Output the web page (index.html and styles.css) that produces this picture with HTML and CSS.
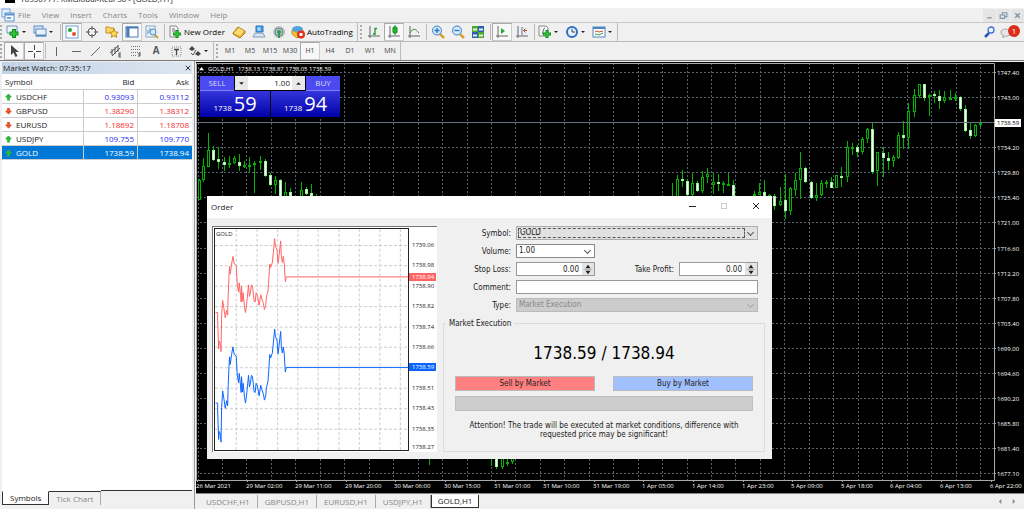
FILE: index.html
```html
<!DOCTYPE html>
<html lang="en">
<head>
  <meta charset="UTF-8">
  <title>GOLD,H1</title>
  <meta name="viewport" content="width=device-width, initial-scale=1.0">
  <link rel="stylesheet" href="styles.css">
</head>
<body>
  <header class="titlebar"><span class="app-icon"></span><span class="app-title">10350777: XMGlobal-Real 30 - [GOLD,H1]</span></header>

  <nav class="menubar">
    <svg class="icon" viewBox="0 0 14 14"><rect x="1" y="1" width="8" height="8" fill="#e8f2fc" stroke="#6fa3d8"/><rect x="4" y="5" width="9" height="8" fill="#fff" stroke="#5b93cf"/><path d="M4 6.500h9" stroke="#5b93cf" stroke-width="2"/><path d="M6 9l1 2 1-2 1 2 1-2" fill="none" stroke="#5b93cf"/></svg>
    <a href="#">File</a><a href="#">View</a><a href="#">Insert</a><a href="#">Charts</a><a href="#">Tools</a><a href="#">Window</a><a href="#">Help</a>
    <div class="window-buttons">
      <button aria-label="Minimize"><svg viewBox="0 0 8 8"><path d="M2 6h4" stroke="#8296ab" stroke-width="1.200"/></svg></button>
      <button aria-label="Restore"><svg viewBox="0 0 8 8"><path d="M3 3V1.500h4V5H5.500M1 3.500h4v3H1z" fill="none" stroke="#8296ab"/></svg></button>
      <button aria-label="Close"><svg viewBox="0 0 8 8"><path d="M2 2l4 4M6 2L2 6" stroke="#8296ab" stroke-width="1.300"/></svg></button>
    </div>
  </nav>

  <div class="toolbar">
    <div class="group first">
      <span class="grip"></span>
      <button class="tool drop" aria-label="New chart"><svg class="icon" viewBox="0 0 14 14"><path d="M1 1h10v7H1z" fill="#eef4fa" stroke="#6d95c0"/><path d="M8 4v9M3.500 8.500h9" stroke="#0b8f1c" stroke-width="4"/><path d="M8 5v7M4.500 8.500h7" stroke="#35c43c" stroke-width="2"/></svg></button>
      <button class="tool drop" aria-label="Profiles"><svg class="icon" viewBox="0 0 14 14"><rect x="1" y="1" width="9" height="7" fill="#d5e5f5" stroke="#5b8cc4"/><rect x="3" y="4" width="10" height="7" fill="#e9f1fa" stroke="#5b8cc4"/><path d="M3 10.500h10" stroke="#5b8cc4" stroke-width="2"/></svg></button>
      <span class="sep"></span>
      <button class="tool pressed" aria-label="Market Watch"><svg class="icon" viewBox="0 0 14 14"><rect x="1" y="1" width="12" height="12" fill="#fff" stroke="#6aa5d9"/><circle cx="5" cy="5" r="2" fill="#1faa2b"/><circle cx="9" cy="9" r="2" fill="#e4502c"/></svg></button>
      <button class="tool" aria-label="Data Window"><svg class="icon" viewBox="0 0 14 14"><circle cx="7" cy="7" r="4" fill="none" stroke="#555"/><path d="M7 1v4M7 9v4M1 7h4M9 7h4" stroke="#555"/></svg></button>
      <button class="tool" aria-label="Navigator"><svg class="icon" viewBox="0 0 14 14"><path d="M1 2h3l1 1h4v5H1z" fill="#fbd964" stroke="#c08d20"/><path d="M9 4l1.300 3 3 .3-2.300 2 .7 3L9 10.700 6.200 12.300l.8-3-2.300-2 3-.3z" fill="#ffdc55" stroke="#c08d20"/></svg></button>
      <button class="tool pressed" aria-label="Terminal"><svg class="icon" viewBox="0 0 14 14"><rect x="1" y="2" width="12" height="10" fill="#fff" stroke="#4a7db5"/><path d="M1 2.500h12" stroke="#4a7db5" stroke-width="2"/><path d="M3 3v9" stroke="#4a7db5" stroke-width="3"/></svg></button>
      <button class="tool" aria-label="Strategy Tester"><svg class="icon" viewBox="0 0 14 14"><rect x="1" y="1" width="9" height="11" fill="#e8f0f8" stroke="#8aa9c8"/><path d="M3 9V5M5 8V3M7 9V6" stroke="#6c8fb4"/><path d="M10 10l3 3" stroke="#d09b2c" stroke-width="2"/><circle cx="8" cy="7" r="3" fill="#cfe6fb" stroke="#4e8cca"/></svg></button>
      <span class="sep"></span>
      <button class="tool wide"><svg class="icon" viewBox="0 0 14 14"><path d="M2 1h6l2 2v9H2z" fill="#f5f5f5" stroke="#888"/><path d="M4 4h3M4 6h4" stroke="#777"/><path d="M9 5v8M5 9h8" stroke="#0b8f1c" stroke-width="3"/><path d="M9 6v6M6 9h6" stroke="#35c43c" stroke-width="1.500"/></svg>New Order</button>
      <button class="tool" aria-label="MetaEditor"><svg class="icon" viewBox="0 0 14 14"><path d="M1 8l5-6 7 4v2l-5 5-7-4z" fill="#e9ae2d" stroke="#b4791a"/><path d="M2 8l5-5 5 3-4 5z" fill="#ffdd74"/></svg></button>
      <button class="tool" aria-label="Options"><svg class="icon" viewBox="0 0 14 14"><path d="M4 1h7v6H4z" fill="#3c9be8" stroke="#3475b4"/><circle cx="7" cy="4" r="2" fill="#9bd2ff"/><path d="M3 8h8l2 4H1z" fill="#d7e5f3" stroke="#8099b5"/></svg></button>
      <button class="tool" aria-label="Signals"><svg class="icon" viewBox="0 0 14 14"><circle cx="7" cy="7" r="6" fill="#b9c3c5"/><circle cx="7" cy="7" r="4" fill="none" stroke="#6f8187"/><circle cx="7" cy="7" r="2" fill="#2c9f48"/><path d="M7 7v6" stroke="#2c9f48" stroke-width="2"/></svg></button>
      <button class="tool wide"><svg class="icon" viewBox="0 0 14 14"><path d="M1 5l5 3 6-3v4l-6 4-5-4z" fill="#f3c63a" stroke="#c18f22"/><ellipse cx="6.500" cy="4" rx="5.500" ry="3" fill="#51a5dc"/><circle cx="10" cy="9.500" r="4" fill="#dc2f1c"/><rect x="8.500" y="8" width="3" height="3" fill="#fff"/></svg>AutoTrading</button>
    </div>
    <div class="group">
      <span class="grip"></span>
      <button class="tool" aria-label="Bar Chart"><svg class="icon" viewBox="0 0 14 14"><path d="M3 1v12M1 11h12" stroke="#666"/><path d="M8 3v7M8 3.500h2M6 9h2" stroke="#169b20" stroke-width="1.300"/></svg></button>
      <button class="tool pressed" aria-label="Candlesticks"><svg class="icon" viewBox="0 0 14 14"><path d="M3 1v12M1 11h12" stroke="#666"/><path d="M8 0v10" stroke="#169b20"/><rect x="6" y="2" width="4" height="6" rx="1" fill="#22b82d" stroke="#118519"/></svg></button>
      <button class="tool" aria-label="Line Chart"><svg class="icon" viewBox="0 0 14 14"><path d="M3 1v12M1 11h12" stroke="#666"/><path d="M3 8c3-5 5-5 9 0" fill="none" stroke="#3c8b3f"/></svg></button>
      <span class="sep"></span>
      <button class="tool" aria-label="Zoom In"><svg class="icon" viewBox="0 0 14 14"><path d="M9 9l4 4" stroke="#d4a22c" stroke-width="2.500"/><circle cx="6" cy="5.500" r="4.500" fill="#d5eafc" stroke="#3a7fc6"/><path d="M3.500 5.500h5M6 3v5" stroke="#2b72ba" stroke-width="1.300"/></svg></button>
      <button class="tool" aria-label="Zoom Out"><svg class="icon" viewBox="0 0 14 14"><path d="M9 9l4 4" stroke="#d4a22c" stroke-width="2.500"/><circle cx="6" cy="5.500" r="4.500" fill="#d5eafc" stroke="#3a7fc6"/><path d="M3.500 5.500h5" stroke="#2b72ba" stroke-width="1.300"/></svg></button>
      <button class="tool" aria-label="Tile Windows"><svg class="icon" viewBox="0 0 14 14"><path d="M1 1h6v6H1zM7 7h6v6H7z" fill="#4da832"/><path d="M7 1h6v6H7zM1 7h6v6H1z" fill="#2e5fb0"/><path d="M2 3.500h4v2H2zM8 3.500h4v2H8zM2 9.500h4v2H2zM8 9.500h4v2H8z" fill="#e6f2e0"/></svg></button>
      <span class="sep"></span>
      <button class="tool pressed" aria-label="Auto Scroll"><svg class="icon" viewBox="0 0 14 14"><path d="M3 1v12M1 11h12" stroke="#666"/><path d="M6 3l4 3-4 3z" fill="#1fae2a"/></svg></button>
      <button class="tool" aria-label="Chart Shift"><svg class="icon" viewBox="0 0 14 14"><path d="M3 1v12M1 11h12" stroke="#666"/><path d="M7 2v8" stroke="#3a78ba"/><path d="M12 5.500H9M10.500 3.500l-2 2 2 2" fill="none" stroke="#c44a26"/></svg></button>
      <span class="sep"></span>
      <button class="tool drop" aria-label="Indicators"><svg class="icon" viewBox="0 0 14 14"><path d="M1 1h7l2 2v8H1z" fill="#f5f5f5" stroke="#888"/><path d="M4 9c1 0 1-6 3-6" fill="none" stroke="#666"/><path d="M9 5v8M5 9h8" stroke="#0b8f1c" stroke-width="3"/><path d="M9 6v6M6 9h6" stroke="#35c43c" stroke-width="1.500"/></svg></button>
      <button class="tool drop" aria-label="Periods"><svg class="icon" viewBox="0 0 14 14"><circle cx="7" cy="7" r="5" fill="#eaf3fc" stroke="#2a6fc4" stroke-width="2"/><path d="M7 4v3h3" fill="none" stroke="#345"/></svg></button>
      <button class="tool drop" aria-label="Templates"><svg class="icon" viewBox="0 0 14 14"><rect x="1" y="2" width="12" height="10" fill="#fff" stroke="#4f86c0"/><path d="M1 3h12" stroke="#4f86c0" stroke-width="2"/><path d="M3 7l2-1 2 1 4-1" fill="none" stroke="#c8432c"/><path d="M3 10l2-1 2 1 4-2" fill="none" stroke="#2f9b35"/></svg></button>
    </div>
    <div class="toolbar-end">
      <button class="tool" aria-label="Search"><svg class="icon" viewBox="0 0 14 14"><path d="M6 8l-4 4" stroke="#2d55b8" stroke-width="2.500"/><circle cx="8" cy="5" r="3" fill="#eef4ff" stroke="#3d6bd0" stroke-width="1.300"/></svg></button>
      <button class="tool notice" aria-label="Messages"><svg class="icon" viewBox="0 0 14 14"><path d="M1 6q4-4 9 0v4q-3 2-6 1l-1 2v-3q-3-1-2-4z" fill="#e6e6e6" stroke="#aaa"/></svg><span class="badge">1</span></button>
    </div>
  </div>

  <div class="toolbar second">
    <div class="group first">
      <span class="grip"></span>
      <button class="tool pressed" aria-label="Cursor"><svg class="icon" viewBox="0 0 14 14"><path d="M4 1v10l2.500-2.500L8.500 13l2-1-2-4H12z" fill="#444"/></svg></button>
      <button class="tool pressed" aria-label="Crosshair"><svg class="icon" viewBox="0 0 14 14"><path d="M7.500 1v5M7.500 9v5M1 7.500h5M9 7.500h5" stroke="#444"/></svg></button>
      <span class="sep"></span>
      <button class="tool" aria-label="Vertical Line"><svg class="icon" viewBox="0 0 14 14"><path d="M7.500 3v9" stroke="#666"/></svg></button>
      <button class="tool" aria-label="Horizontal Line"><svg class="icon" viewBox="0 0 14 14"><path d="M3 7.500h9" stroke="#666"/></svg></button>
      <button class="tool" aria-label="Trendline"><svg class="icon" viewBox="0 0 14 14"><path d="M2 12l9-9" stroke="#666"/></svg></button>
      <button class="tool" aria-label="Channel"><svg class="icon" viewBox="0 0 14 14"><path d="M1 9l8-7M3 12l8-8M3 5v6M6 3v7M9 1v7" stroke="#555" fill="none"/><path d="M12 9h-2v4h2M10 11h2" stroke="#555" fill="none"/></svg></button>
      <button class="tool" aria-label="Fibonacci"><svg class="icon" viewBox="0 0 14 14"><path d="M2 2.500h10M2 5.500h10M2 8.500h10M2 11.500h6" stroke="#777" stroke-dasharray="1 1"/><path d="M12 9h-2v4M10 11h2" stroke="#555" fill="none"/></svg></button>
      <button class="tool letter" aria-label="Text">A</button>
      <button class="tool" aria-label="Text Label"><svg class="icon" viewBox="0 0 14 14"><rect x="3" y="3" width="9" height="9" fill="none" stroke="#888" stroke-dasharray="1 1"/><path d="M5 5.500h5M7.500 5v6" stroke="#444" stroke-width="1.300"/></svg></button>
      <button class="tool drop" aria-label="Arrows"><svg class="icon" viewBox="0 0 14 14"><path d="M4 2l3 3-3 2-3-2zM10 7l3 3-3 2-3-2z" fill="#444"/><path d="M3 9l2 2 3-5" fill="none" stroke="#555"/></svg></button>
    </div>
    <div class="group periods">
      <span class="grip"></span>
      <button class="tool">M1</button><button class="tool">M5</button><button class="tool">M15</button><button class="tool">M30</button><button class="tool pressed">H1</button><button class="tool">H4</button><button class="tool">D1</button><button class="tool">W1</button><button class="tool">MN</button>
    </div>
  </div>

  <main class="workspace">
    <aside class="market-watch">
      <div class="panel-title">Market Watch: 07:35:17 <button aria-label="Close panel"><svg viewBox="0 0 8 8"><path d="M1 1l6 6M7 1L1 7" stroke="#222" stroke-width="1.200"/></svg></button></div>
      <table>
        <thead>
          <tr><th>Symbol</th><th>Bid</th><th>Ask</th></tr>
        </thead>
        <tbody>
          <tr class="up"><td>USDCHF</td><td>0.93093</td><td>0.93112</td></tr>
          <tr class="down"><td>GBPUSD</td><td>1.38290</td><td>1.38312</td></tr>
          <tr class="down"><td>EURUSD</td><td>1.18692</td><td>1.18708</td></tr>
          <tr class="up"><td>USDJPY</td><td>109.755</td><td>109.770</td></tr>
          <tr class="up selected"><td>GOLD</td><td>1738.59</td><td>1738.94</td></tr>
        </tbody>
      </table>
      <div class="panel-tabs">
        <button class="active">Symbols</button><button>Tick Chart</button>
      </div>
    </aside>

    <section class="chart-window">
      <div class="chart">
        <svg id="chart"></svg>
        <div class="chart-info"><svg viewBox="0 0 6 4"><path d="M0 4l3-4 3 4z" fill="#fff"/></svg><span>GOLD,H1</span><span>1738.13 1738.87 1738.05 1738.59</span></div>
        <div class="one-click">
          <button class="side">SELL</button>
          <div class="lots">
            <button aria-label="Less"><svg viewBox="0 0 6 6"><path d="M1 2h4L3 4z" fill="#222"/></svg></button>
            <input type="text" value="1.00" aria-label="Lots">
            <button aria-label="More"><svg viewBox="0 0 6 6"><path d="M1 4h4L3 2z" fill="#222"/></svg></button>
          </div>
          <button class="side">BUY</button>
          <button class="quote"><small>1738</small>59</button>
          <button class="quote"><small>1738</small>94</button>
        </div>
      </div>
      <div class="chart-tabs">
        <button>USDCHF,H1</button><button>GBPUSD,H1</button><button>EURUSD,H1</button><button>USDJPY,H1</button><button class="active">GOLD,H1</button>
        <span class="tab-scroll"><svg viewBox="0 0 6 6"><path d="M4 0v6L1 3z" fill="#888"/></svg><svg viewBox="0 0 6 6"><path d="M2 0v6l3-3z" fill="#888"/></svg></span>
      </div>
    </section>
  </main>

  <div class="dialog" role="dialog" aria-labelledby="order-title">
    <div class="dialog-title">
      <span id="order-title">Order</span>
      <button aria-label="Minimize"><svg viewBox="0 0 10 10"><path d="M2 5.500h7" stroke="#222"/></svg></button>
      <button aria-label="Maximize" disabled><svg viewBox="0 0 10 10"><rect x="2.500" y="2.500" width="5" height="5" fill="none" stroke="#ccc"/></svg></button>
      <button aria-label="Close"><svg viewBox="0 0 10 10"><path d="M2 2l6 6M8 2L2 8" stroke="#222"/></svg></button>
    </div>
    <div class="dialog-body">
      <div class="ticks">
        <div class="tick-plot">
          <span>GOLD</span>
          <svg viewBox="30 99 582 669" preserveAspectRatio="none">
            <path class="tick-grid" d="M94 99v669M157 99v669M219 99v669M280 99v669M341 99v669M404 99v669M465 99v669M527 99v669M589 99v669M30 149h582M30 210h582M30 272h582M30 334h582M30 396h582M30 457h582M30 519h582M30 581h582M30 643h582M30 705h582"/>
            <g class="ask"><polyline id="ticks" points="32,352 38,352 38,375 41,462 43,438 47,450 48,470 50,365 53,315 57,340 61,368 65,345 68,360 70,295 72,245 74,212 76,235 80,205 84,182 88,205 94,210 97,265 101,290 103,262 107,300 109,320 110,272 113,318 115,292 119,335 122,352 125,330 127,310 130,280 131,268 134,303 137,290 140,268 143,272 148,318 151,320 154,292 158,300 163,330 168,298 171,310 176,325 179,343 183,330 185,305 190,285 193,240 195,205 198,215 203,200 206,170 210,128 212,150 217,162 220,203 223,180 228,135 230,180 233,200 236,182 239,205 242,258 245,244 612,244"/></g>
            <use class="bid" href="#ticks" y="274"/>
          </svg>
        </div>
        <div class="tick-axis">
          <span>1739.06</span><span>1738.98</span><span>1738.90</span><span>1738.82</span><span>1738.74</span><span>1738.66</span><span class="bid-price">1738.59</span><span>1738.51</span><span>1738.43</span><span>1738.35</span><span class="lowest">1738.27</span>
          <span class="ask-price">1738.94</span>
        </div>
      </div>
      <form class="order-form">
        <div class="fields">
          <label for="symbol">Symbol:</label>
          <div class="combo full focused"><select id="symbol"><option>GOLD</option></select></div>
          <label for="volume">Volume:</label>
          <div class="combo white"><select id="volume"><option>1.00</option></select></div>
          <label for="sl">Stop Loss:</label>
          <div class="spin"><input id="sl" type="text" value="0.00"><svg viewBox="0 0 12 14"><path d="M3 6h6L6 2zM3 9h6l-3 4z" fill="#222"/><path d="M1 7.500h10" stroke="#aaa"/></svg></div>
          <label for="tp">Take Profit:</label>
          <div class="spin"><input id="tp" type="text" value="0.00"><svg viewBox="0 0 12 14"><path d="M3 6h6L6 2zM3 9h6l-3 4z" fill="#222"/><path d="M1 7.500h10" stroke="#aaa"/></svg></div>
          <label for="comment">Comment:</label>
          <input class="full" id="comment" type="text">
          <label for="type">Type:</label>
          <div class="combo full off"><select id="type" disabled><option>Market Execution</option></select></div>
        </div>
        <fieldset>
          <legend>Market Execution</legend>
          <p class="price">1738.59 / 1738.94</p>
          <div class="deal">
            <button type="button" class="sell">Sell by Market</button>
            <button type="button" class="buy">Buy by Market</button>
          </div>
          <button type="button" class="close-order" aria-label="Close order" disabled></button>
          <p class="warning">Attention! The trade will be executed at market conditions, difference with requested price may be significant!</p>
        </fieldset>
      </form>
    </div>
  </div>

  <script src="chart.js"></script>
</body>
</html>
```
FILE: chart.js
```js
const svg = document.getElementById('chart');
const axisWidth = 30;
const axisHeight = 13;
const baseWidth = 798; // plot width the bar positions are stored for

// x, high, body top, body bottom, low, falling
const bars = [
  [3,117,118,138,138,0], [7,96,104,118,120,0], [12,71,88,105,105,0], [17,84,88,98,99,1],
  [22,85,97,100,107,1], [28,95,100,103,109,1], [33,94,101,103,106,0], [38,94,96,101,102,0],
  [43,92,100,104,109,1], [48,99,103,104,106,0], [53,95,103,105,110,0], [58,99,101,103,131,0],
  [64,94,99,101,108,0], [69,97,99,114,115,1], [74,111,113,123,124,1], [79,114,118,123,132,0],
  [84,117,118,135,135,1], [89,120,130,135,135,0], [94,126,130,134,135,1], [105,120,128,135,135,0],
  [110,125,127,132,133,1], [115,122,131,134,135,1], [120,132,134,135,136,0],
  [233,380,385,390,403,0], [295,380,385,390,404,0], [300,390,392,405,407,1], [306,390,396,405,407,0],
  [311,390,400,402,404,0], [316,390,396,400,402,0],
  [476,121,134,135,135,0], [481,113,117,135,135,0], [486,108,117,119,125,1], [491,117,119,133,134,1],
  [496,111,121,133,134,0], [501,119,121,129,130,1], [506,109,115,129,131,0], [511,106,112,115,121,0],
  [517,111,120,123,132,0], [522,112,120,122,129,1], [527,119,121,122,131,0], [532,111,122,123,123,0],
  [537,118,123,134,134,1], [558,129,132,133,134,0], [563,121,130,133,133,0], [568,118,130,134,134,1],
  [573,132,133,134,134,0], [578,132,134,144,148,1], [584,125,139,143,144,0], [589,112,138,149,157,1],
  [594,125,126,149,153,0], [599,111,118,128,134,0], [604,90,106,118,137,0], [609,105,106,120,121,1],
  [615,119,120,136,137,1], [620,121,133,136,139,0], [625,118,121,133,134,0], [630,118,120,122,126,0],
  [635,115,120,126,126,1], [640,113,113,126,126,0], [645,105,114,115,125,1], [651,79,85,115,120,0],
  [656,81,85,86,93,0], [661,83,85,90,95,1], [666,75,77,90,92,0], [671,66,67,77,81,0],
  [676,61,67,110,112,1], [681,90,90,109,124,0], [687,85,91,96,115,1], [692,90,96,99,108,1],
  [697,93,95,99,105,0], [702,70,73,96,97,0], [707,59,73,76,87,1], [712,41,49,76,87,0],
  [718,27,33,50,55,0], [723,22,22,34,36,0], [728,22,22,36,39,1], [733,32,33,35,54,0],
  [738,29,32,34,41,1], [743,28,34,39,47,1], [748,29,35,39,41,0], [754,28,36,37,38,0],
  [759,31,35,37,39,0], [764,34,35,47,49,1], [769,43,47,69,70,1], [774,61,68,74,77,1],
  [779,62,63,74,75,0], [784,59,61,63,65,0]
];

const prices = ['1747.40', '1743.00', '', '1734.20', '1729.80', '1725.40', '1721.00', '1716.60', '1712.20',
  '1707.80', '1703.40', '1699.00', '1694.60', '1690.20', '1685.80', '1681.40', '1677.10'];

const times = ['26 Mar 2021', '29 Mar 02:00', '29 Mar 11:00', '29 Mar 20:00', '30 Mar 06:00', '30 Mar 15:00',
  '31 Mar 01:00', '31 Mar 10:00', '31 Mar 19:00', '1 Apr 05:00', '1 Apr 14:00', '1 Apr 23:00',
  '5 Apr 09:00', '5 Apr 18:00', '6 Apr 04:00', '6 Apr 13:00', '6 Apr 22:00'];

function add(tag, attrs, text) {
  const el = document.createElementNS('http://www.w3.org/2000/svg', tag);
  for (const name in attrs) el.setAttribute(name, attrs[name]);
  if (text) el.textContent = text;
  svg.appendChild(el);
}

function line(cls, x1, y1, x2, y2) {
  add('line', { class: cls, x1, y1, x2, y2 });
}

function draw() {
  svg.textContent = '';
  const w = svg.clientWidth - axisWidth;
  const h = svg.clientHeight - axisHeight;
  const shift = w - baseWidth;

  // Grid
  for (let x = 784 + shift; x > 0; x -= 24.45) line('grid', Math.round(x) + 0.5, 1, Math.round(x) + 0.5, h);
  prices.forEach((p, i) => {
    const y = Math.round(10 + i * 25.08) + 0.5;
    line('grid', 0, y, w, y);
    if (p) {
      line('frame', w, y, w + 2, y);
      add('text', { class: 'axis', x: w + 3, y: y + 2 }, p);
    }
  });

  // Bars
  bars.forEach(([x, high, top, bottom, low, falling]) => {
    const cx = x + shift + 0.5;
    line('wick', cx, high, cx, low);
    add('rect', {
      class: falling ? 'bar falling' : 'bar',
      x: cx - 1, y: top + 0.5, width: 2, height: Math.max(bottom - top - 1, 1)
    });
  });

  // Current price
  line('current', 0, 60.5, w, 60.5);
  add('rect', { class: 'price-box', x: w + 1, y: 57, width: 26, height: 8 });
  add('text', { class: 'axis dark', x: w + 3, y: 63 }, '1738.59');

  // Frame and time axis
  add('path', { class: 'frame', d: `M0.5 ${h}V1.500H${w + 0.5}V${h + 0.5}H0` });
  times.forEach((t, i) => {
    const x = Math.round(i * 49.6 + shift);
    line('frame', x + 1.5, h, x + 1.5, h + 2);
    add('text', { class: 'axis', x, y: h + 8 }, t);
  });
}

draw();
window.addEventListener('resize', draw);
```
FILE: styles.css
```css
* {
  box-sizing: border-box;
}

body {
  margin: 0;
  height: 100vh;
  display: flex;
  flex-direction: column;
  position: relative;
  overflow: hidden;
  background: #f0f0f0;
  color: #222;
  font: 8px/12px "Open Sans", "Noto Sans", sans-serif;
}

button, input, select {
  font: inherit;
  color: inherit;
  margin: 0;
  padding: 0;
  border: 0;
  border-radius: 0;
  background: none;
}

svg {
  display: block;
}

.icon {
  width: 14px;
  height: 14px;
  flex: none;
}

/* Title and menu */
.titlebar {
  height: 8px;
  display: flex;
  align-items: flex-end;
  gap: 5px;
  padding: 0 5px 5px;
  background: #fff;
  line-height: 8px;
}

.app-icon {
  width: 10px;
  height: 10px;
  background: #000;
}

.menubar {
  height: 15px;
  display: flex;
  align-items: center;
  gap: 11px;
  padding-left: 1px;
  border-bottom: 1px solid #c8c8c8;
}

.menubar .icon {
  margin-right: -8px;
}

.menubar a {
  color: #888;
  text-decoration: none;
}

.window-buttons {
  margin-left: auto;
  display: flex;
  gap: 1px;
}

.window-buttons button {
  width: 13px;
  height: 13px;
  padding: 2px;
  background: #e5e5e5;
}

/* Toolbars */
.toolbar {
  height: 19px;
  display: flex;
  border-bottom: 1px solid #bbb;
}

.toolbar.second {
  border-bottom-color: #777;
}

.group {
  display: flex;
  align-items: stretch;
  padding-left: 2px;
  border-right: 1px solid #bbb;
}

.group.first {
  padding-left: 0;
}

.grip {
  width: 3px;
  margin: 2px 1px 2px 0;
  border-left: 2px dotted #aaa;
}

.sep {
  width: 1px;
  margin: 1px 1px 1px 2px;
  background: #bbb;
}

.second .sep {
  margin: 1px 0 1px 1px;
}

.tool {
  width: 20px;
  display: flex;
  align-items: center;
  justify-content: center;
}

.tool.pressed {
  background: #f8f8f8;
  border: 1px solid #ccc;
  border-top-color: #aaa;
  border-left-color: #aaa;
}

.tool.drop {
  width: 27px;
  justify-content: space-between;
  padding: 0 5px 0 2px;
}

.tool.drop::after {
  content: "";
  border: 2px solid transparent;
  border-top-color: #222;
  border-bottom: 0;
}

.tool.wide {
  width: auto;
  gap: 2px;
  padding: 0 4px 0 2px;
  color: #000;
}

.tool.letter {
  font: bold 10px/12px "Liberation Sans", sans-serif;
  color: #555;
}

.periods .tool {
  font-size: 7px;
  color: #444;
}

.toolbar-end {
  margin-left: auto;
  display: flex;
  padding-right: 4px;
}

.notice {
  position: relative;
}

.notice .icon {
  margin-right: 6px;
}

.badge {
  position: absolute;
  top: 2px;
  right: 0;
  width: 12px;
  height: 12px;
  border-radius: 50%;
  background: #dc2c1a;
  color: #fff;
}

/* Market watch */
.workspace {
  flex: 1;
  min-height: 0;
  display: flex;
}

.market-watch {
  width: 195px;
  flex: none;
  display: flex;
  flex-direction: column;
  padding: 1px 2px 4px;
  border-right: 1px solid #999;
}

.panel-title {
  display: flex;
  justify-content: space-between;
  align-items: center;
  height: 12px;
  padding: 0 1px;
  background: linear-gradient(90deg, #c3d2e4, #dce6f1);
}

.panel-title button {
  width: 6px;
}

.market-watch table {
  width: 100%;
  table-layout: fixed;
  border-collapse: collapse;
  background: #fff;
}

.market-watch th, .market-watch td {
  height: 14px;
  padding: 1px 3px 0;
  text-align: right;
  font-weight: normal;
  border-bottom: 1px solid #ccc;
}

.market-watch th {
  height: 15px;
}

.market-watch td + td {
  border-left: 1px solid #ccc;
}

.market-watch th:first-child {
  width: 81px;
  text-align: left;
}

.market-watch td:first-child {
  text-align: left;
  color: #222;
}

.market-watch td:first-child::before {
  content: "";
  display: inline-block;
  width: 7px;
  height: 7px;
  margin-right: 4px;
  vertical-align: -1px;
  background: #2fb53a;
  clip-path: polygon(50% 0, 100% 50%, 70% 60%, 70% 100%, 30% 100%, 30% 60%, 0 50%);
}

.market-watch .down td:first-child::before {
  background: #e4552c;
  clip-path: polygon(50% 100%, 100% 50%, 70% 40%, 70% 0, 30% 0, 30% 40%, 0 50%);
}

.up td {
  color: #2a2af5;
}

.down td {
  color: #f52a2a;
}

.market-watch .selected td {
  background: #0078d7;
  color: #fff;
}

.panel-tabs {
  flex: 1;
  display: flex;
  align-items: flex-end;
  background: linear-gradient(#fff, #fff) top / 100% calc(100% - 14px) no-repeat;
}

.panel-tabs button {
  height: 14px;
  padding: 0 7px;
  border-right: 1px solid #aaa;
  color: #888;
}

.panel-tabs::after {
  content: "";
  flex: 1;
  height: 14px;
}

.panel-tabs button, .panel-tabs::after {
  border-top: 1px solid #333;
}

.panel-tabs .active {
  border: 1px solid #333;
  border-top-color: #fff;
  background: #fff;
  color: #222;
}

/* Chart */
.chart-window {
  flex: 1;
  min-width: 0;
  display: flex;
  flex-direction: column;
  padding: 1px 0 0 1px;
}

.chart {
  flex: 1;
  min-height: 0;
  position: relative;
  background: #000;
}

#chart {
  width: 100%;
  height: 100%;
}

.grid {
  stroke: #56626e;
  stroke-dasharray: 2 2;
}

.wick, .bar {
  stroke: #00b400;
}

.bar {
  fill: #000;
}

.falling {
  fill: #fff;
  stroke: #a0f0a0;
}

.current {
  stroke: #66727f;
}

.frame {
  fill: none;
  stroke: #aaa;
}

.price-box {
  fill: #fff;
}

.axis {
  fill: #fff;
  font-size: 6px;
}

.axis.dark {
  fill: #000;
}

.chart-info {
  position: absolute;
  top: 2px;
  left: 3px;
  display: flex;
  align-items: center;
  gap: 4px;
  color: #fff;
  font-size: 6px;
  line-height: 10px;
}

.chart-info svg {
  width: 5px;
}

.one-click {
  position: absolute;
  top: 14px;
  left: 4px;
  width: 140px;
  display: grid;
  grid-template: 15px 26px / repeat(70, 1fr);
  color: #fff;
}

.side {
  grid-column: span 17;
  background: #4a4af0;
  border-bottom: 1px solid #7d7dff;
  color: #dde;
}

.lots {
  grid-column: span 36;
  display: flex;
  margin: 0 1px 1px;
  background: #fff;
  color: #222;
}

.lots button {
  width: 13px;
  padding: 3px;
  background: #e8e8e8;
}

.lots input {
  flex: 1;
  min-width: 0;
  padding-right: 2px;
  text-align: right;
}

.quote {
  grid-column: span 35;
  display: flex;
  align-items: baseline;
  justify-content: center;
  gap: 2px;
  background: linear-gradient(#3535dc, #0000a8);
  font-size: 20px;
  line-height: 25px;
}

.quote:last-child {
  border-left: 1px solid #000;
}

.quote small {
  font-size: 8px;
}

.chart-tabs {
  height: 16px;
  display: flex;
  align-items: flex-start;
  padding: 1px 8px 0 3px;
  border-top: 1px solid #888;
}

.chart-tabs button {
  height: 13px;
  padding: 0 7px;
  border-right: 1px solid #aaa;
  color: #888;
}

.chart-tabs .active {
  padding: 0 6px;
  border: 1px solid #333;
  border-top: 0;
  background: #fff;
  color: #222;
}

.tab-scroll {
  margin: 4px 0 0 auto;
  display: flex;
  gap: 8px;
}

.tab-scroll svg {
  width: 5px;
}

/* Order dialog */
.dialog {
  position: absolute;
  top: 196px;
  left: 207px;
  width: 565px;
  background: #f0f0f0;
  font-family: "DejaVu Sans Condensed", "Liberation Sans", sans-serif;
  line-height: 9px;
}

.dialog-title {
  height: 22px;
  display: flex;
  align-items: center;
  gap: 22px;
  padding: 0 11px 2px 4px;
  background: #fff;
  font-family: "Open Sans", sans-serif;
}

.dialog-title span {
  margin-right: auto;
}

.dialog-title button {
  width: 10px;
}

.dialog-body {
  display: flex;
  gap: 6px;
  padding: 8px 7px 7px 5px;
}

.ticks {
  width: 225px;
  height: 226px;
  flex: none;
  display: flex;
  padding: 1px;
  background: #fff;
  border-top: 1px solid #777;
  border-left: 1px solid #777;
}

.tick-plot {
  flex: 1;
  position: relative;
  border: 1px solid #222;
}

.tick-plot span {
  position: absolute;
  top: 1px;
  left: 1px;
  font: 6px/8px "Open Sans", sans-serif;
}

.tick-plot svg {
  width: 100%;
  height: 100%;
}

.tick-grid {
  stroke: #ccc;
  stroke-width: 3;
  stroke-dasharray: 9 6;
}

.tick-plot polyline {
  fill: none;
  stroke-width: 3;
}

.ask {
  stroke: #ff6464;
}

.bid {
  stroke: #0a64ff;
}

.tick-axis {
  width: 27px;
  position: relative;
  display: flex;
  flex-direction: column;
  justify-content: space-between;
  padding-top: 13px;
  font: 6px/8px "Open Sans", sans-serif;
}

.tick-axis span {
  height: 8px;
  padding-left: 3px;
}

.tick-axis .lowest {
  margin-top: -2px;
}

.tick-axis .bid-price {
  background: #0a64ff;
  color: #fff;
}

.tick-axis .ask-price {
  position: absolute;
  top: 45px;
  left: 0;
  right: 0;
  background: #ff6464;
  color: #fff;
}

.order-form {
  flex: 1;
}

.fields {
  display: grid;
  grid-template-columns: 68px 79px 1fr 79px;
  grid-auto-rows: 14px;
  gap: 4px 5px;
  padding-right: 7px;
  align-items: center;
}

.fields label {
  text-align: right;
  grid-column-start: 1;
}

.fields label[for="tp"] {
  grid-column-start: 3;
}

.fields .full {
  grid-column: 2 / -1;
}

.fields > input, .combo, .spin {
  width: 100%;
  height: 14px;
  border: 1px solid #999;
  background: #fff;
}

.fields > input {
  padding: 0 3px;
}

.combo {
  position: relative;
  background: #e1e1e1;
  border-color: #adadad;
}

.combo.white {
  background: #fff;
  border-color: #888;
}

.combo.off {
  background: #ccc;
  border-color: #bbb;
}

.combo select {
  appearance: none;
  display: block;
  width: 100%;
  height: 12px;
  padding: 0 2px;
  line-height: 12px;
  opacity: 1;
}

.combo.off select {
  color: #888;
}

.combo.focused select {
  width: calc(100% - 13px);
  height: 10px;
  margin: 1px;
  padding: 0 1px;
  line-height: 8px;
  border: 1px dashed #555;
}

.combo::after {
  content: "";
  position: absolute;
  top: 3px;
  right: 4px;
  width: 4px;
  height: 4px;
  border: solid #555;
  border-width: 0 1px 1px 0;
  transform: rotate(45deg);
}

.combo.off::after {
  border-color: #aaa;
}

.spin {
  display: flex;
}

.spin input {
  flex: 1;
  min-width: 0;
  padding-right: 3px;
  text-align: right;
}

.spin svg {
  width: 12px;
  height: 12px;
  background: #e4e4e4;
}

fieldset {
  margin: 7px 0 0;
  padding: 0 11px 12px;
  border: 1px solid #dcdcdc;
}

legend {
  margin-left: -9px;
  padding: 0 3px;
}

.price {
  margin: 15px 0 13px;
  text-align: center;
  font-size: 17px;
  line-height: 20px;
  color: #000;
}

.deal {
  display: grid;
  grid-template-columns: 1fr 1fr;
  gap: 18px;
}

.deal button {
  height: 15px;
  border: 1px solid #bbb;
}

.sell {
  background: #ff8080;
}

.buy {
  background: #a0c0ff;
}

.close-order {
  display: block;
  width: 100%;
  height: 15px;
  margin-top: 5px;
  border: 1px solid #bfbfbf;
  background: #ccc;
}

.warning {
  margin: 10px 6px 0;
  text-align: center;
}
```
